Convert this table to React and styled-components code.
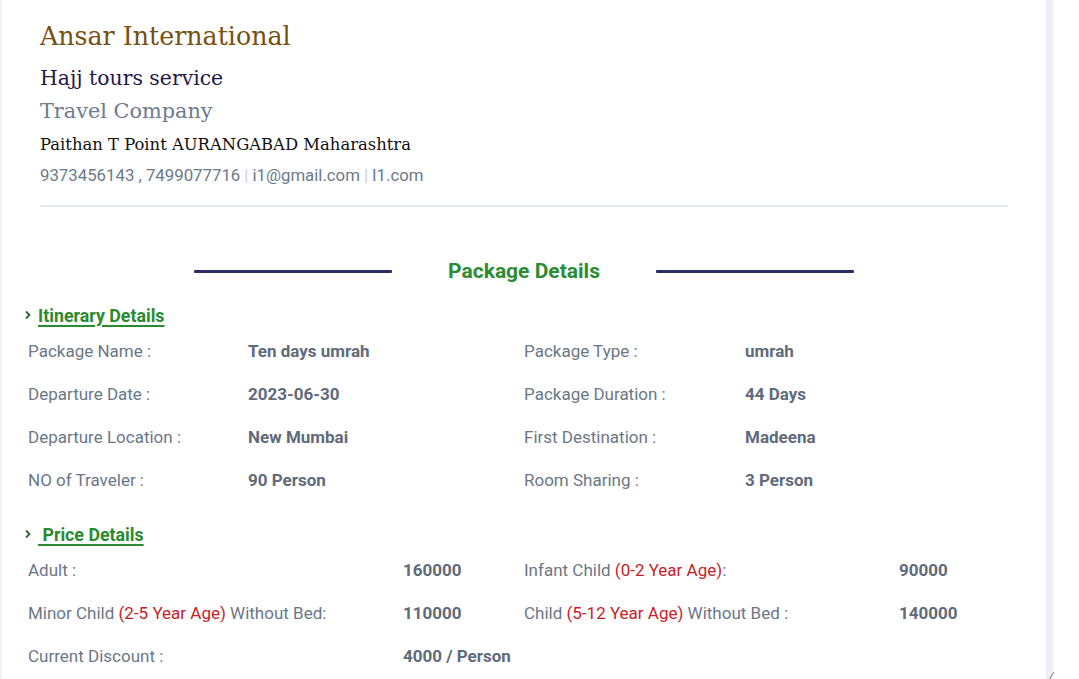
import React from "react";
import styled, { createGlobalStyle } from "styled-components";

const Global = createGlobalStyle`
  html, body { margin: 0; padding: 0; background: #ffffff; }
  body { font-family: Roboto, "Open Sans", Arial, sans-serif; }
  * { box-sizing: border-box; }
`;

const Page = styled.div`
  display: flex;
  width: 1079px;
  height: 679px;
  overflow: hidden;
  position: relative;
  background: #fff;
`;

const Main = styled.main`
  width: 1046px;
  flex: none;
  border-left: 2px solid #f2f2f3;
`;

const ScrollBand = styled.div`
  width: 7px;
  flex: none;
  background: #eff0f5;
`;

const Header = styled.header`
  padding: 20px 0 0 38px;
  display: flex;
  flex-direction: column;
  font-family: "DejaVu Serif", "Liberation Serif", serif;
`;

const Brand = styled.h1`
  margin: 0;
  font-weight: 400;
  font-size: ${p => p.size}px;
  line-height: ${p => p.lh}px;
  color: ${p => p.color};
  margin-top: ${p => p.mt || 0}px;
  white-space: nowrap;
`;

const Contact = styled.div`
  margin-top: 6px;
  font-family: Roboto, "Open Sans", sans-serif;
  font-size: 16.8px;
  line-height: 22px;
  color: #6c7a8a;
`;

const Sep = styled.span`
  color: #c9cdd2;
  margin: 0 4px;
`;

const Rule = styled.hr`
  margin: 19px 38px 0 38px;
  border: none;
  height: 2px;
  background: #e6e9eb;
`;

const HeadingRow = styled.div`
  margin-top: 49px;
  height: 30px;
  display: flex;
  align-items: center;
  justify-content: center;
  gap: 56px;
`;

const HeadLine = styled.span`
  width: 198px;
  height: 3px;
  background: #2c2e63;
  border-radius: 1px;
`;

const HeadTitle = styled.h2`
  margin: 0;
  font-size: 21px;
  font-weight: 700;
  color: #2c8c34;
  line-height: 30px;
`;

const Section = styled.section`
  padding: 0 26px 0 22px;
  margin-top: ${p => p.mt}px;
`;

const SectionTitle = styled.div`
  display: flex;
  align-items: center;
  gap: 6px;
  height: 24px;
  font-size: 17.8px;
  font-weight: 700;
  color: #2a8a2f;
`;

const Under = styled.span`
  text-decoration: underline;
  text-underline-offset: 3px;
  text-decoration-thickness: 2px;
  white-space: pre;
`;

const Grid = styled.div`
  margin-top: 3px;
  display: grid;
  grid-template-columns: ${p => p.cols};
  padding-left: 4px;
`;

const Label = styled.div`
  height: 43px;
  line-height: 43px;
  font-size: 17px;
  color: #6b7786;
  white-space: nowrap;
`;

const Value = styled.div`
  height: 43px;
  line-height: 43px;
  font-size: 17px;
  font-weight: 700;
  color: #5f6b7b;
  white-space: nowrap;
`;

const Red = styled.span`
  color: #c62229;
`;

const Corner = styled.div`
  position: absolute;
  left: 1048px;
  top: 666px;
  width: 40px;
  height: 40px;
  border-radius: 50%;
  border-left: 1.5px solid #8a8a8a;
  border-top: 1.5px solid transparent;
`;

const Chevron = () => (
  <svg width="8" height="10" viewBox="0 0 8 10" aria-hidden="true">
    <polyline points="2,1.5 5.5,5 2,8.5" fill="none" stroke="#2a6a2f" strokeWidth="1.8" />
  </svg>
);

const itinerary = [
  ["Package Name :", "Ten days umrah", "Package Type :", "umrah"],
  ["Departure Date :", "2023-06-30", "Package Duration :", "44 Days"],
  ["Departure Location :", "New Mumbai", "First Destination :", "Madeena"],
  ["NO of Traveler :", "90 Person", "Room Sharing :", "3 Person"],
];

export default function App() {
  return (
    <>
      <Global />
      <Page>
        <Main>
          <Header>
            <Brand size={25.3} lh={34} color="#76500f">Ansar International</Brand>
            <Brand size={20.4} lh={30} mt={9} color="#1f1849">Hajj tours service</Brand>
            <Brand size={20.8} lh={30} mt={3} color="#6c7b8e">Travel Company</Brand>
            <Brand size={16.4} lh={26} mt={6} color="#111111">Paithan T Point AURANGABAD Maharashtra</Brand>
            <Contact>
              9373456143 , 7499077716<Sep>|</Sep>i1@gmail.com<Sep>|</Sep>I1.com
            </Contact>
          </Header>
          <Rule />
          <HeadingRow>
            <HeadLine />
            <HeadTitle>Package Details</HeadTitle>
            <HeadLine />
          </HeadingRow>

          <Section mt={17}>
            <SectionTitle>
              <Chevron />
              <Under>Itinerary Details</Under>
            </SectionTitle>
            <Grid cols="220px 276px 221px 1fr">
              {itinerary.map((r, i) => (
                <React.Fragment key={i}>
                  <Label>{r[0]}</Label>
                  <Value>{r[1]}</Value>
                  <Label>{r[2]}</Label>
                  <Value>{r[3]}</Value>
                </React.Fragment>
              ))}
            </Grid>
          </Section>

          <Section mt={20}>
            <SectionTitle>
              <Chevron />
              <Under>{" Price Details"}</Under>
            </SectionTitle>
            <Grid cols="375px 121px 375px 1fr">
              <Label>Adult :</Label>
              <Value>160000</Value>
              <Label>Infant Child <Red>(0-2 Year Age)</Red>:</Label>
              <Value>90000</Value>
              <Label>Minor Child <Red>(2-5 Year Age)</Red> Without Bed:</Label>
              <Value>110000</Value>
              <Label>Child <Red>(5-12 Year Age)</Red> Without Bed :</Label>
              <Value>140000</Value>
              <Label>Current Discount :</Label>
              <Value>4000 / Person</Value>
            </Grid>
          </Section>
        </Main>
        <ScrollBand />
        <Corner />
      </Page>
    </>
  );
}
